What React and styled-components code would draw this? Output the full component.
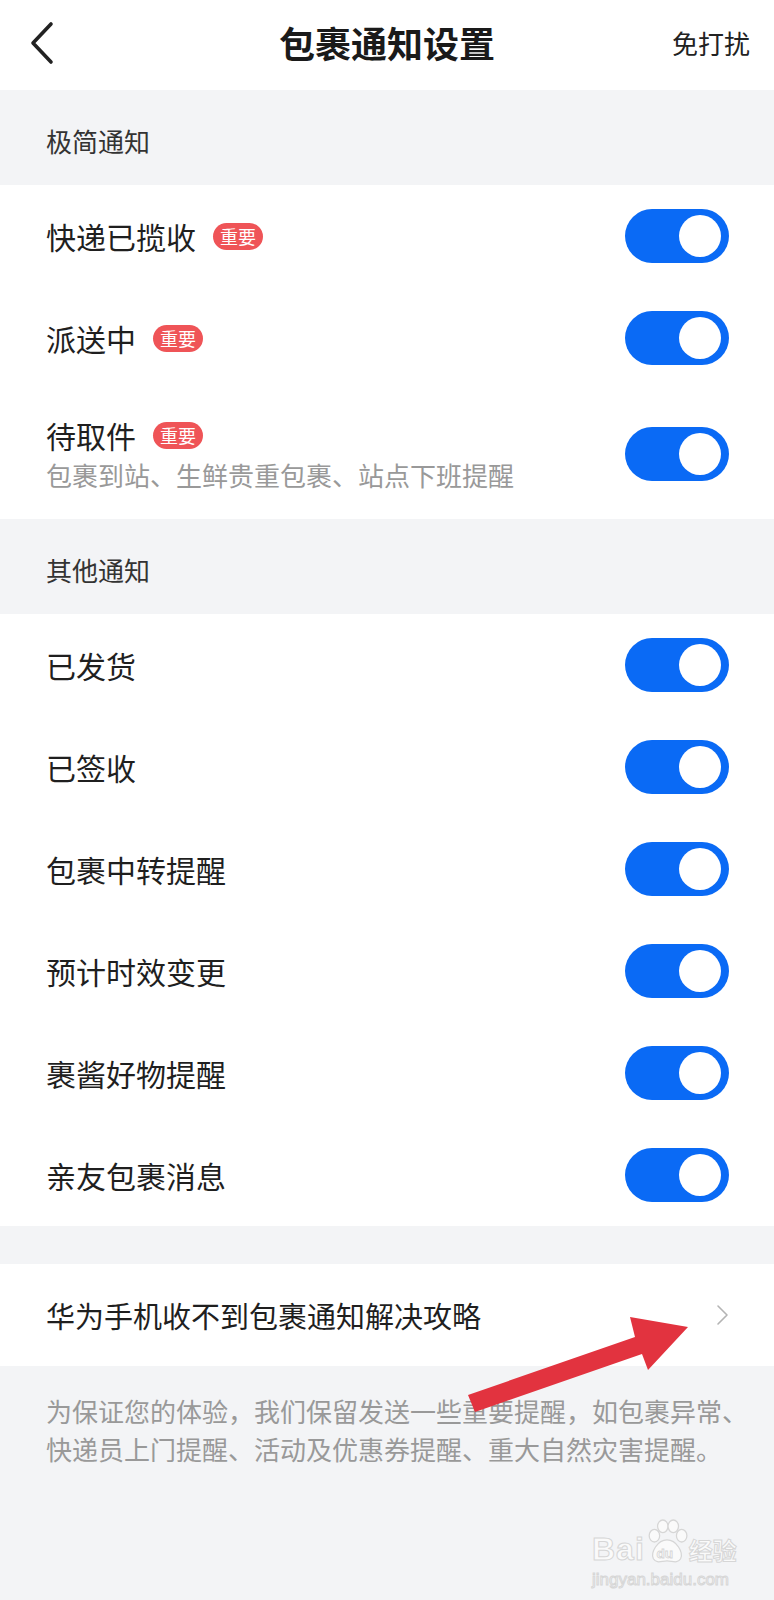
import styled, { createGlobalStyle } from 'styled-components';

const GlobalStyle = createGlobalStyle`
    html, body {
        margin: 0;
        padding: 0;
        background: #f3f4f6;
    }
    body {
        font-family: "Noto Sans CJK SC", "Noto Sans", sans-serif;
        -webkit-font-smoothing: antialiased;
    }
`

const Page = styled.div`
    position: relative;
    width: 774px;
    min-height: 1600px;
    background: #f3f4f6;
    overflow: hidden;
`
const Header = styled.header`
    position: relative;
    height: 90px;
    background: #fff;
    display: flex;
    align-items: center;
    justify-content: space-between;
    padding: 0 24px 0 28px;
    box-sizing: border-box;
`
const BackButton = styled.button`
    border: 0;
    background: none;
    padding: 0;
    width: 30px;
    height: 44px;
    display: flex;
    align-items: center;
    margin-top: -4px;
`
const Title = styled.h1`
    position: absolute;
    left: 0;
    right: 0;
    top: 0;
    margin: 0;
    line-height: 84px;
    text-align: center;
    font-size: 36px;
    font-weight: 700;
    color: #1a1a1a;
    pointer-events: none;
`
const HeaderAction = styled.span`
    font-size: 26px;
    color: #222;
    margin-top: -6px;
`
const SectionTitle = styled.div`
    height: 95px;
    display: flex;
    align-items: center;
    padding: 6px 0 0 46px;
    box-sizing: border-box;
    font-size: 26px;
    color: #333;
`
const Group = styled.div`
    background: #fff;
`
const Row = styled.div`
    display: flex;
    align-items: center;
    justify-content: space-between;
    min-height: 102px;
    padding: ${p => (p.$tall ? '26px' : '0')} 45px ${p => (p.$tall ? '26px' : '0')} 46px;
    box-sizing: border-box;
`
const RowText = styled.div`
    display: flex;
    flex-direction: column;
`
const RowTitle = styled.div`
    display: flex;
    align-items: center;
    font-size: ${p => p.$size || 30}px;
    line-height: 40px;
    color: #1f1f1f;
`
const Badge = styled.span`
    margin-left: 17px;
    height: 27px;
    padding: 0 7px;
    border-radius: 14px;
    background: #ef5457;
    color: #fff;
    font-size: 18px;
    line-height: 27px;
`
const RowSub = styled.div`
    margin-top: 2px;
    font-size: 26px;
    line-height: 36px;
    color: #999;
`
const Toggle = styled.div`
    position: relative;
    flex: none;
    width: 104px;
    height: 54px;
    border-radius: 27px;
    background: ${p => (p.$on ? '#0a6af5' : '#dcdcdc')};
    &::after {
        content: '';
        position: absolute;
        top: 6px;
        ${p => (p.$on ? 'right: 8px;' : 'left: 8px;')}
        width: 42px;
        height: 42px;
        border-radius: 50%;
        background: #fff;
    }
`
const Spacer = styled.div`
    height: 38px;
`
const Footer = styled.p`
    margin: 0;
    padding: 26px 20px 0 46px;
    font-size: 26px;
    line-height: 38px;
    color: #999;
`
const Arrow = styled.svg`
    position: absolute;
    left: 460px;
    top: 1310px;
`
const Watermark = styled.div`
    position: absolute;
    left: 592px;
    top: 1518px;
    color: #fafafa;
    -webkit-text-stroke: 1px #d6d6d6;
    font-family: "Liberation Sans", Arial, sans-serif;
`
const MarkLine = styled.div`
    display: flex;
    align-items: flex-end;
    height: 48px;
`
const MarkBig = styled.span`
    font-size: 32px;
    font-weight: 700;
    line-height: 34px;
    letter-spacing: 1px;
`
const MarkCn = styled.span`
    font-family: "Noto Sans CJK SC", sans-serif;
    font-size: 24px;
    font-weight: 700;
    line-height: 32px;
`
const MarkUrl = styled.div`
    font-size: 17px;
    line-height: 22px;
    margin-top: 3px;
`

const simple = [
    { title: '快递已揽收', badge: true },
    { title: '派送中', badge: true },
    { title: '待取件', badge: true, sub: '包裹到站、生鲜贵重包裹、站点下班提醒' },
]

const others = ['已发货', '已签收', '包裹中转提醒', '预计时效变更', '裹酱好物提醒', '亲友包裹消息']

const App = () => {
    return (
        <Page>
            <GlobalStyle />
            <Header>
                <BackButton>
                    <svg width="28" height="44" viewBox="0 0 28 44">
                        <polyline points="23,3 5,22 23,41" fill="none" stroke="#222" strokeWidth="3.6" strokeLinecap="round" strokeLinejoin="round" />
                    </svg>
                </BackButton>
                <Title>包裹通知设置</Title>
                <HeaderAction>免打扰</HeaderAction>
            </Header>

            <SectionTitle>极简通知</SectionTitle>
            <Group>
                {simple.map(item => (
                    <Row key={item.title} $tall={!!item.sub}>
                        <RowText>
                            <RowTitle>
                                {item.title}
                                {item.badge && <Badge>重要</Badge>}
                            </RowTitle>
                            {item.sub && <RowSub>{item.sub}</RowSub>}
                        </RowText>
                        <Toggle $on />
                    </Row>
                ))}
            </Group>

            <SectionTitle>其他通知</SectionTitle>
            <Group>
                {others.map(t => (
                    <Row key={t}>
                        <RowTitle>{t}</RowTitle>
                        <Toggle $on />
                    </Row>
                ))}
            </Group>

            <Spacer />
            <Group>
                <Row>
                    <RowTitle $size={29}>华为手机收不到包裹通知解决攻略</RowTitle>
                    <svg width="14" height="22" viewBox="0 0 14 22">
                        <polyline points="3,2 12,11 3,20" fill="none" stroke="#b4b4b4" strokeWidth="1.6" strokeLinecap="round" strokeLinejoin="round" />
                    </svg>
                </Row>
            </Group>

            <Footer>
                为保证您的体验，我们保留发送一些重要提醒，如包裹异常、快递员上门提醒、活动及优惠券提醒、重大自然灾害提醒。
            </Footer>

            <Arrow width="240" height="110" viewBox="0 0 240 110">
                <polygon points="8,85 175,27 170,7 228,17 188,60 182,44 15,102" fill="#e2333f" />
            </Arrow>

            <Watermark>
                <MarkLine>
                    <MarkBig>Bai</MarkBig>
                    <svg width="44" height="48" viewBox="0 0 42 44">
                        <g fill="#fafafa" stroke="#d6d6d6" strokeWidth="1.2">
                            <ellipse cx="9" cy="16" rx="5" ry="6" />
                            <ellipse cx="17" cy="7" rx="5" ry="6" />
                            <ellipse cx="27" cy="7" rx="5" ry="6" />
                            <ellipse cx="35" cy="16" rx="5" ry="6" />
                            <path d="M21 20 C12 20 5 32 8 38 C11 43 16 40 21 40 C26 40 31 43 34 38 C37 32 30 20 21 20 Z" />
                        </g>
                        <text x="11" y="37" fontSize="13" fontWeight="700" fontFamily="Liberation Sans, sans-serif" fill="#fafafa" stroke="#d6d6d6" strokeWidth="0.8">du</text>
                    </svg>
                    <MarkCn>经验</MarkCn>
                </MarkLine>
                <MarkUrl>jingyan.baidu.com</MarkUrl>
            </Watermark>
        </Page>
    )
}

export default App;
